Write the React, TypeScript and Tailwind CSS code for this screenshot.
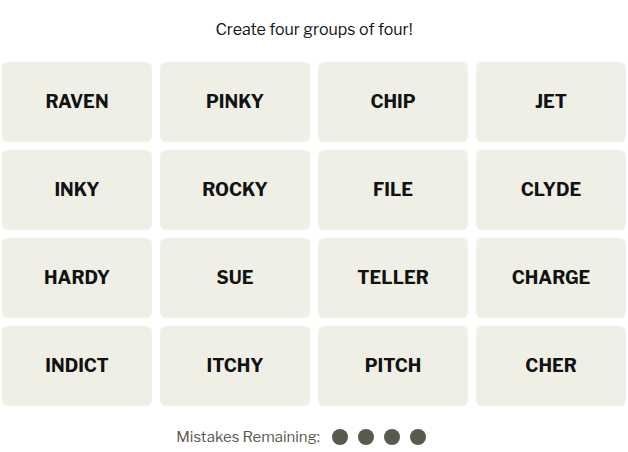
const words = [
  "RAVEN", "PINKY", "CHIP", "JET",
  "INKY", "ROCKY", "FILE", "CLYDE",
  "HARDY", "SUE", "TELLER", "CHARGE",
  "INDICT", "ITCHY", "PITCH", "CHER",
];

export default function App() {
  return (
    <div className="w-[628px] h-[452px] bg-white font-['Libre_Franklin','Inter',sans-serif]">
      {/* Title */}
      <div className="pt-[18px] text-center text-[16px] leading-6 text-[#121212]">
        Create four groups of four!
      </div>

      {/* Board */}
      <div className="mt-[20px] px-[2px] grid grid-cols-4 gap-2">
        {words.map((w) => (
          <div
            key={w}
            className="h-[80px] pb-[2px] rounded-md bg-[#efefe6] flex items-center justify-center text-[18px] font-bold text-[#121212]"
          >
            {w}
          </div>
        ))}
      </div>

      {/* Mistakes */}
      <div className="mt-[19px] pr-[26px] flex items-center justify-center text-[15px] leading-6 text-[#5a594e]">
        <span className="mr-[12px]">Mistakes Remaining:</span>
        <div className="flex gap-[10px]">
          <span className="w-4 h-4 rounded-full bg-[#5a594e]" />
          <span className="w-4 h-4 rounded-full bg-[#5a594e]" />
          <span className="w-4 h-4 rounded-full bg-[#5a594e]" />
          <span className="w-4 h-4 rounded-full bg-[#5a594e]" />
        </div>
      </div>
    </div>
  );
}
